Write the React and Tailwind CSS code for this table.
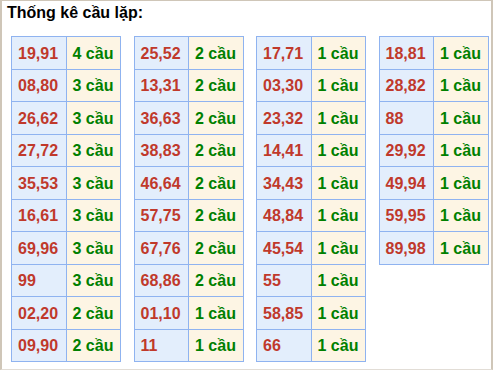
import React from "react";

const tables = [
  [["19,91", 4], ["08,80", 3], ["26,62", 3], ["27,72", 3], ["35,53", 3], ["16,61", 3], ["69,96", 3], ["99", 3], ["02,20", 2], ["09,90", 2]],
  [["25,52", 2], ["13,31", 2], ["36,63", 2], ["38,83", 2], ["46,64", 2], ["57,75", 2], ["67,76", 2], ["68,86", 2], ["01,10", 1], ["11", 1]],
  [["17,71", 1], ["03,30", 1], ["23,32", 1], ["14,41", 1], ["34,43", 1], ["48,84", 1], ["45,54", 1], ["55", 1], ["58,85", 1], ["66", 1]],
  [["18,81", 1], ["28,82", 1], ["88", 1], ["29,92", 1], ["49,94", 1], ["59,95", 1], ["89,98", 1]],
];

const LoTable = ({ rows }) => (
  <table className="w-[110px] border-collapse table-fixed">
    <tbody>
      {rows.map(([pair, count]) => (
        <tr key={pair} className="h-[32.5px]">
          <td className="w-1/2 border border-[#8fb3f0] bg-[#e3eefc] pl-[6px] pt-[2px] text-[#c0392b]">{pair}</td>
          <td className="w-1/2 border border-[#8fb3f0] bg-[#fdf5e4] pl-[6px] pt-[2px] text-[#008000]">{count} cầu</td>
        </tr>
      ))}
    </tbody>
  </table>
);

export default function App() {
  return (
    <div
      className="w-[493px] h-[370px] bg-white border-l-2 border-r-2 border-t border-b border-l-[#cfc6b8] border-r-[#cfc6b8] border-t-[#cfc6b8] border-b-[#e2ddd6] font-bold text-[16px]"
      style={{ fontFamily: '"Liberation Sans", Arial, sans-serif' }}
    >
      <h1 className="pl-[5px] pt-[3px] text-[16px] leading-[18px] text-black">Thống kê cầu lặp:</h1>
      <div className="flex items-start gap-[12.5px] pl-[9px] pt-[14px]">
        {tables.map((rows, i) => (
          <LoTable key={i} rows={rows} />
        ))}
      </div>
    </div>
  );
}
